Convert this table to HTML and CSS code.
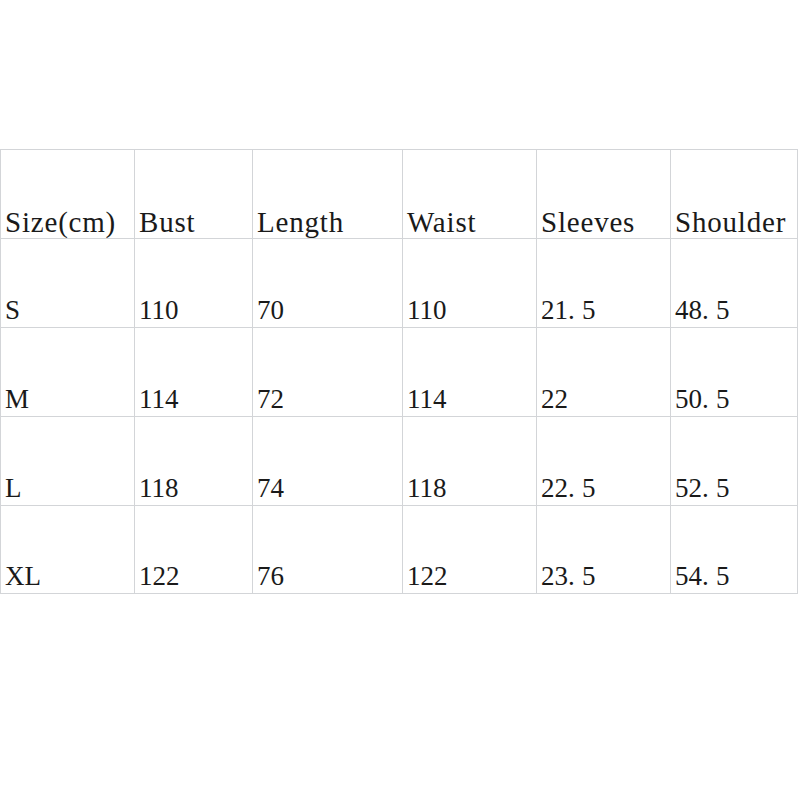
FILE: index.html
```html
<!DOCTYPE html>
<html lang="en">
<head>
<meta charset="utf-8">
<title>Size chart</title>
<link rel="stylesheet" href="styles.css">
</head>
<body>
<div class="chart">
  <div class="cell head">Size(cm)</div>
  <div class="cell head">Bust</div>
  <div class="cell head">Length</div>
  <div class="cell head">Waist</div>
  <div class="cell head">Sleeves</div>
  <div class="cell head">Shoulder</div>

  <div class="cell">S</div>
  <div class="cell">110</div>
  <div class="cell">70</div>
  <div class="cell">110</div>
  <div class="cell">21<span class="pt">.</span>5</div>
  <div class="cell">48<span class="pt">.</span>5</div>

  <div class="cell">M</div>
  <div class="cell">114</div>
  <div class="cell">72</div>
  <div class="cell">114</div>
  <div class="cell">22</div>
  <div class="cell">50<span class="pt">.</span>5</div>

  <div class="cell">L</div>
  <div class="cell">118</div>
  <div class="cell">74</div>
  <div class="cell">118</div>
  <div class="cell">22<span class="pt">.</span>5</div>
  <div class="cell">52<span class="pt">.</span>5</div>

  <div class="cell">XL</div>
  <div class="cell">122</div>
  <div class="cell">76</div>
  <div class="cell">122</div>
  <div class="cell">23<span class="pt">.</span>5</div>
  <div class="cell">54<span class="pt">.</span>5</div>
</div>
</body>
</html>
```
FILE: styles.css
```css
html, body {
  margin: 0;
  padding: 0;
  background: #ffffff;
}

body {
  padding-top: 149px;
  font-family: "Liberation Serif", "Times New Roman", serif;
  color: #1a1a1a;
}

.chart {
  display: grid;
  grid-template-columns: 134px 118px 150px 134px 134px 127px;
  grid-template-rows: repeat(4, 89px) 88px;
  width: 798px;
  box-sizing: border-box;
  border-left: 1px solid #d3d5d8;
  border-top: 1px solid #d3d5d8;
}

.cell {
  box-sizing: border-box;
  border-right: 1px solid #d3d5d8;
  border-bottom: 1px solid #d3d5d8;
  display: flex;
  align-items: flex-end;
  padding: 0 0 3px 4px;
  font-size: 27px;
  line-height: 1;
  white-space: nowrap;
}

.head {
  font-size: 29px;
  padding-bottom: 1px;
  letter-spacing: 0.8px;
}

.pt {
  letter-spacing: 0.27em;
}
```
